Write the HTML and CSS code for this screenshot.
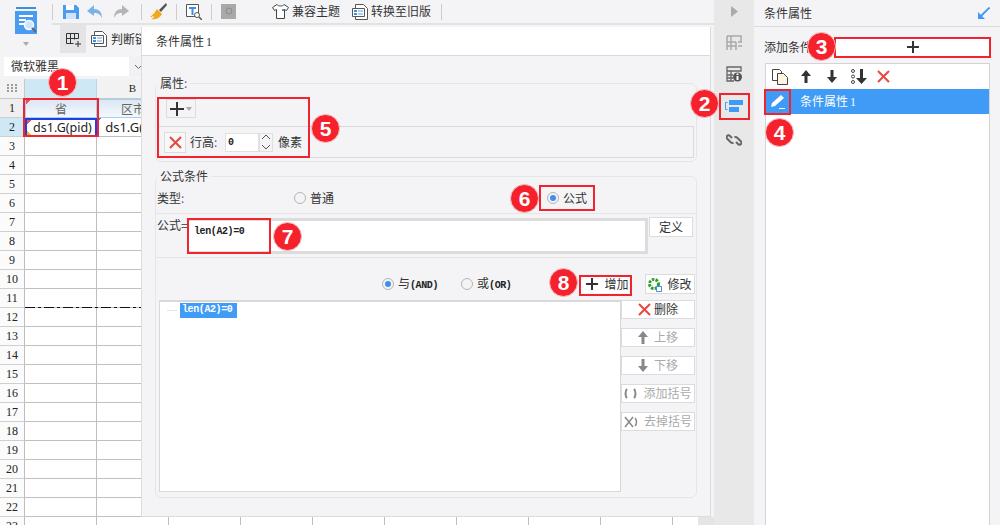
FILE: index.html
```html
<!DOCTYPE html>
<html lang="zh">
<head>
<meta charset="utf-8">
<title>条件属性</title>
<link rel="stylesheet" href="styles.css">
</head>
<body>
<div class="app">
  <main class="main">
    <header class="head">
      <div class="logo">
        <svg width="22" height="28" viewBox="0 0 22 28"><path d="M1 0h20v2H1z" fill="#3d8fe6"/><path d="M0 4h22v23H0z" fill="#4a9cf0"/><path d="M4 8h14v2H4zM4 12h7v2H4zM4 16h6v2H4z" fill="#fff"/><circle cx="14" cy="18" r="4.500" fill="#cfe4fa" stroke="#fff" stroke-width="1.500"/><path d="M17 21l4 4" stroke="#667" stroke-width="2"/></svg>
        <svg class="logo-caret" width="6" height="4" viewBox="0 0 6 4"><path d="M0 0h6L3 4z" fill="#aaa"/></svg>
      </div>
      <div class="head-rows">
        <div class="tools">
          <i class="sep sep-0"></i>
          <svg class="tool" width="16" height="16" viewBox="0 0 16 16"><path d="M0 1h13l3 3v11H0z" fill="#4a9cf0"/><path d="M3 1h8v5H3z" fill="#fff"/><path d="M3 9h10v6H3z" fill="#cfe4fa"/></svg>
          <svg class="tool tool-gap" width="17" height="16" viewBox="0 0 17 16"><path d="M7 1L0 7l7 5V9c4 0 6 1 8 5 0-6-3-9-8-9z" fill="#7db2e8"/></svg>
          <svg class="tool tool-gap" width="17" height="16" viewBox="0 0 17 16"><path d="M10 1l7 6-7 5V9C6 9 4 10 2 14c0-6 3-9 8-9z" fill="#b5b5b5"/></svg>
          <i class="sep sep-a"></i>
          <svg class="tool" width="17" height="17" viewBox="0 0 17 17"><path d="M16 0L9 7l2 2 6-7z" fill="#555"/><path d="M7 6l5 5c-2 4-6 6-11 5 3-1 3-2 3-3-2 1-3 1-4 1 3-2 5-5 7-8z" fill="#f0a81e"/></svg>
          <i class="sep sep-b"></i>
          <svg class="tool" width="17" height="17" viewBox="0 0 17 17"><path d="M1.500 1.500h12v12h-12z" fill="#fff" stroke="#555"/><path d="M4 4h7v2H8.500v6h-2V6H4z" fill="#3d8fe6"/><circle cx="12" cy="12" r="2.500" fill="#fff" stroke="#555"/><path d="M14 14l3 3" stroke="#555" stroke-width="1.500"/></svg>
          <i class="sep sep-c"></i>
          <svg class="tool" width="15" height="15" viewBox="0 0 15 15"><path d="M0 0h15v15H0z" fill="#a9a9a9"/><circle cx="8" cy="7" r="3" fill="none" stroke="#8a8a8a"/></svg>
          <span class="tool-label tool-theme">
            <svg width="17" height="15" viewBox="0 0 17 15"><path d="M5 .5L.5 3.500l2 3 2-1v9h8v-9l2 1 2-3L12 .5c-1 2-6 2-7 0z" fill="#fff" stroke="#444"/><path d="M10 5h2v2h-2z" fill="#3d8fe6"/></svg>
            兼容主题
          </span>
          <span class="tool-label tool-old">
            <svg width="16" height="16" viewBox="0 0 16 16"><path d="M3.500 .5h8l4 4v11h-12z" fill="#fff" stroke="#555"/><path d="M.5 4.500h12v8H.5z" fill="#fff" stroke="#555"/><path d="M2 6h3v2H2zM2 9h3v2H2z" fill="#3d8fe6"/><path d="M6 6h5v2H6zM6 9h5v2H6z" fill="#a9cff5"/></svg>
            转换至旧版
          </span>
          <i class="sep sep-d"></i>
        </div>
        <div class="tabs">
          <span class="tab tab-on">
            <svg width="15" height="15" viewBox="0 0 15 15"><path d="M.5 1.500h12M.5 6.500h12M.5 11.500h7M.5 1.500v10M4.500 1.500v10M8.500 1.500v6M12.500 1.500v5M12 9v6M9 12h6" fill="none" stroke="#333"/></svg>
          </span>
          <span class="tab">
            <svg width="16" height="16" viewBox="0 0 16 16"><path d="M3.500 .5h8l4 4v11h-12z" fill="#fff" stroke="#555"/><path d="M.5 4.500h12v8H.5z" fill="#fff" stroke="#555"/><path d="M2 6h3v2H2zM2 9h3v2H2z" fill="#3d8fe6"/><path d="M6 6h5v2H6zM6 9h5v2H6z" fill="#a9cff5"/></svg>
            判断链
          </span>
        </div>
      </div>
    </header>
    <div class="fontbar">
      <div class="font-select"><span>微软雅黑</span>
        <svg width="9" height="6" viewBox="0 0 9 6"><path d="M1 1l3.500 3.500L8 1" fill="none" stroke="#666"/></svg>
      </div>
    </div>
    <div class="colheads">
      <div class="corner"><svg width="11" height="9" viewBox="0 0 11 9"><path d="M0 0h2v2H0zM4 0h2v2H4zM8 0h2v2H8zM0 3h2v2H0zM4 3h2v2H4zM8 3h2v2H8zM0 6h2v2H0zM4 6h2v2H4zM8 6h2v2H8z" fill="#9a9a9a"/></svg></div>
      <div class="colhead colhead-on"></div>
      <div class="colhead">B</div>
      <div class="colhead"></div>
      <div class="colhead"></div>
      <div class="colhead"></div>
      <div class="colhead"></div>
      <div class="colhead"></div>
      <div class="colhead"></div>
    </div>
    <div class="sheet">
      <div class="rownums">
        <span class="rownum-plain">1</span><span class="rownum-on">2</span><span>3</span><span>4</span><span>5</span><span>6</span><span>7</span><span>8</span><span>9</span><span>10</span><span>11</span><span>12</span><span>13</span><span>14</span><span>15</span><span>16</span><span>17</span><span>18</span><span>19</span><span>20</span><span>21</span><span>22</span><span>23</span>
      </div>
      <div class="cells">
        <div class="cellrow">
          <div class="cell cell-head cell-flag">省</div>
          <div class="cell cell-head">区市</div>
        </div>
        <div class="cellrow">
          <div class="cell cell-data cell-selected">ds1.G(pid)</div>
          <div class="cell cell-data cell-mark">ds1.G(fid)</div>
        </div>
        <div class="pagebreak"></div>
      </div>
      <div class="vscroll"></div>
    </div>
  </main>

  <nav class="rail">
    <svg class="rail-arrow" width="7" height="11" viewBox="0 0 7 11"><path d="M0 0l7 5.500L0 11z" fill="#aaa"/></svg>
    <svg class="rail-icon rail-cell" width="16" height="16" viewBox="0 0 16 16"><path d="M1 1h14v6M1 1v14M5 1v14M1 7h9M1 11h9M10 7v8M12 7h4M12 11h4" fill="none" stroke="#a8a8a8" stroke-width="1.500"/></svg>
    <svg class="rail-icon rail-info" width="16" height="16" viewBox="0 0 16 16"><path d="M1 1h14v4H1zM1 5v10h7M5 5v10M1 9h6M1 12h6" fill="none" stroke="#666" stroke-width="1.300"/><circle cx="11.500" cy="11" r="4.500" fill="#555"/><path d="M10.500 7.500h2v1.500h-2zM10.500 10h2v4h-2z" fill="#fff"/></svg>
    <svg class="rail-icon rail-cond" width="18" height="14" viewBox="0 0 18 14"><path d="M2.500 3.500H.5v7h2" fill="none" stroke="#3f9bf5"/><path d="M4 1h14v5H4zM4 8h10v5H4z" fill="#3f9bf5"/></svg>
    <svg class="rail-icon rail-link" width="16" height="16" viewBox="0 0 16 16"><path d="M6 6L3.500 3.500a2 2 0 0 0-2.500 3L5 10.500a2 2 0 0 0 2.500 0M10 10l2.500 2.500a2 2 0 0 0 2.500-3L11 5.500a2 2 0 0 0-2.500 0" fill="none" stroke="#666" stroke-width="2"/></svg>
  </nav>

  <aside class="panel">
    <div class="panel-title">
      <span>条件属性</span>
      <svg width="12" height="12" viewBox="0 0 12 12"><path d="M11.500 .5L3 9" stroke="#3f9bf5" stroke-width="1.800"/><path d="M0 12V5l7 7z" fill="#3f9bf5"/></svg>
    </div>
    <div class="add-row">
      <span class="add-label">添加条件</span>
      <div class="add-button"><svg width="12" height="12" viewBox="0 0 12 12"><path d="M0 5h12v2H0zM5 0h2v12H5z" fill="#333"/></svg></div>
    </div>
    <div class="cond-list">
      <div class="cond-tools">
        <svg class="ct-copy" width="16" height="16" viewBox="0 0 16 16"><path d="M.5.500h7l2 2v9h-9z" fill="#fff" stroke="#444"/><path d="M5.500 4.500h6l4 4v7h-10z" fill="#fdf6e3" stroke="#444"/></svg>
        <svg class="ct-up" width="10" height="13" viewBox="0 0 10 13"><path d="M5 0l5 6H6.500v7h-3V6H0z" fill="#333"/></svg>
        <svg class="ct-down" width="10" height="13" viewBox="0 0 10 13"><path d="M5 13L0 7h3.500V0h3v7H10z" fill="#333"/></svg>
        <svg class="ct-bottom" width="16" height="15" viewBox="0 0 16 15"><circle cx="2" cy="2" r="1.500" fill="none" stroke="#444"/><circle cx="2" cy="7.500" r="1.500" fill="none" stroke="#444"/><circle cx="2" cy="13" r="1.500" fill="none" stroke="#444"/><path d="M10.500 15L5 9h4V0h3v9h4z" fill="#333"/></svg>
        <svg class="ct-del" width="13" height="13" viewBox="0 0 13 13"><path d="M1 1l11 11M12 1L1 12" stroke="#e8493f" stroke-width="2"/></svg>
      </div>
      <div class="cond-item">
        <svg class="cond-pen" width="16" height="16" viewBox="0 0 16 16"><path d="M11 1l3 3-9 8-4 1 1-4z" fill="#fff"/><path d="M9 14h6v1H9z" fill="#fff"/></svg>
        <span>条件属性<span class="latin">1</span></span>
      </div>
    </div>
  </aside>

  <section class="dialog">
    <div class="dialog-title">条件属性<span class="latin">1</span></div>
    <fieldset class="group group-attr">
      <legend>属性<span class="colon">:</span></legend>
      <div class="attr-add">
        <div class="plus-menu">
          <svg width="14" height="14" viewBox="0 0 14 14"><path d="M0 6h14v2H0zM6 0h2v14H6z" fill="#333"/></svg>
          <svg width="6" height="4" viewBox="0 0 6 4"><path d="M0 0h6L3 4z" fill="#aaa"/></svg>
        </div>
      </div>
      <div class="attr-row">
        <div class="attr-del"><svg width="13" height="13" viewBox="0 0 13 13"><path d="M1 1l11 11M12 1L1 12" stroke="#e8493f" stroke-width="2"/></svg></div>
        <span class="attr-label">行高<span class="colon">:</span></span>
        <div class="spin-input">0</div>
        <div class="spin">
          <svg width="10" height="6" viewBox="0 0 10 6"><path d="M1 5l4-4 4 4" fill="none" stroke="#555"/></svg>
          <svg width="10" height="6" viewBox="0 0 10 6"><path d="M1 1l4 4 4-4" fill="none" stroke="#555"/></svg>
        </div>
        <span class="attr-unit">像素</span>
      </div>
    </fieldset>

    <fieldset class="group group-formula">
      <legend>公式条件</legend>
      <div class="type-row">
        <span class="type-label">类型<span class="colon">:</span></span>
        <label class="radio-wrap type-normal"><i class="radio"></i><span>普通</span></label>
        <label class="radio-wrap"><i class="radio radio-on"></i><span>公式</span></label>
      </div>
      <div class="formula-row">
        <span class="formula-label">公式=</span>
        <div class="formula-box"><span class="code">len(A2)=0</span></div>
        <div class="btn btn-define">定义</div>
      </div>
      <div class="logic-row">
        <label class="radio-wrap logic-and"><i class="radio radio-on"></i><span>与<span class="code">(AND)</span></span></label>
        <label class="radio-wrap logic-or"><i class="radio"></i><span>或<span class="code">(OR)</span></span></label>
        <div class="btn btn-add"><svg width="12" height="12" viewBox="0 0 12 12"><path d="M0 5h12v2H0zM5 0h2v12H5z" fill="#333"/></svg>增加</div>
        <div class="btn btn-edit">
          <svg width="15" height="15" viewBox="0 0 15 15"><circle cx="7" cy="7" r="4.500" fill="#fff" stroke="#2ca02c" stroke-width="3" stroke-dasharray="2.500 1.200"/><path d="M9.500 9.500h5v5h-5z" fill="#fff" stroke="#3d8fe6"/></svg>
          修改
        </div>
      </div>
      <div class="rules">
        <div class="rule-list">
          <div class="rule"><i class="rule-line"></i><span class="code rule-text">len(A2)=0</span></div>
        </div>
        <div class="rule-actions">
          <div class="btn btn-side btn-del"><svg width="13" height="13" viewBox="0 0 13 13"><path d="M1 1l11 11M12 1L1 12" stroke="#e8493f" stroke-width="2"/></svg>删除</div>
          <div class="btn btn-side btn-off"><svg width="10" height="13" viewBox="0 0 10 13"><path d="M5 0l5 6H6.500v7h-3V6H0z" fill="#888"/></svg>上移</div>
          <div class="btn btn-side btn-off"><svg width="10" height="13" viewBox="0 0 10 13"><path d="M5 13L0 7h3.500V0h3v7H10z" fill="#888"/></svg>下移</div>
          <div class="btn btn-side btn-off"><svg width="13" height="11" viewBox="0 0 13 11"><path d="M3 1C1 3 1 8 3 10M10 1c2 2 2 7 0 9" fill="none" stroke="#888" stroke-width="2"/></svg>添加括号</div>
          <div class="btn btn-side btn-off"><svg width="14" height="12" viewBox="0 0 14 12"><path d="M1 1l8 10M9 1l-8 10M11 2c2 2 2 6 0 8" fill="none" stroke="#888" stroke-width="1.500"/></svg>去掉括号</div>
        </div>
      </div>
    </fieldset>
  </section>

  <div class="redbox box-1"></div>
  <div class="redbox box-2"></div>
  <div class="redbox box-3"></div>
  <div class="redbox box-4"></div>
  <div class="redbox box-5"></div>
  <div class="redbox box-6"></div>
  <div class="redbox box-7"></div>
  <div class="redbox box-8"></div>
  <div class="mark mark-1">1</div>
  <div class="mark mark-2">2</div>
  <div class="mark mark-3">3</div>
  <div class="mark mark-4">4</div>
  <div class="mark mark-5">5</div>
  <div class="mark mark-6">6</div>
  <div class="mark mark-7">7</div>
  <div class="mark mark-8">8</div>
</div>
</body>
</html>
```
FILE: styles.css
```css
* { box-sizing: border-box; }
html, body { margin: 0; padding: 0; }
body {
  width: 1000px;
  height: 525px;
  overflow: hidden;
  font: 12px/1.2 "Noto Sans CJK SC", "Liberation Sans", sans-serif;
  color: #333;
  background: #f4f4f6;
}
svg { display: block; flex: none; }
.app { position: relative; display: flex; width: 1000px; height: 525px; overflow: hidden; }

/* main column */
.main { width: 714px; flex: none; display: flex; flex-direction: column; background: #f4f4f6; }
.head { display: flex; height: 56px; flex: none; }
.logo { width: 52px; display: flex; flex-direction: column; align-items: center; padding: 7px 0 0; gap: 7px; }
.head-rows { flex: 1; display: flex; flex-direction: column; }
.tools { height: 25px; display: flex; align-items: center; border-bottom: 2px solid #e2e2e2; flex: none; }
.tool-gap { margin-left: 8px; }
.sep { width: 1px; height: 16px; background: #ccc; flex: none; }
.sep-0 { margin-right: 10px; }
.sep-a { margin: 0 8px 0 12px; }
.sep-b { margin: 0 8px 0 9px; }
.sep-c { margin: 0 9px 0 9px; }
.tool-label { display: flex; align-items: center; gap: 3px; color: #333; }
.tool-theme { margin-left: 36px; }
.tool-old { margin-left: 12px; }
.sep-d { margin-left: 10px; }
.tabs { display: flex; height: 28px; padding-left: 8px; }
.tab { display: flex; align-items: center; gap: 4px; padding: 0 5px; }
.tab-on { width: 26px; background: #e4e4e6; justify-content: center; padding: 0; }
.fontbar { height: 23px; flex: none; padding: 1px 0 0 4px; }
.font-select { width: 141px; height: 19px; display: flex; align-items: center; justify-content: space-between; padding: 0 2px 0 7px; background: linear-gradient(to right, #fff 125px, #f1f1f3 125px); }
.colheads { display: flex; height: 20px; flex: none; background: #f2f2f2; }
.corner { width: 25px; display: flex; align-items: center; justify-content: center; border-right: 1px solid #c8c8c8; border-bottom: 1px solid #c8c8c8; flex: none; }
.colhead { width: 72px; flex: none; text-align: center; font: 11px/19px "Liberation Serif", serif; color: #222; border-right: 1px solid #cfcfcf; border-bottom: 1px solid #c8c8c8; }
.colhead-on { background: #cfe8f5; border-color: #b8d6e8; }

.sheet { flex: 1; display: flex; min-height: 0; overflow: hidden; }
.rownums { width: 25px; flex: none; display: flex; flex-direction: column; background: #fbfbfb; }
.rownums span { height: 19px; flex: none; text-align: center; font: 12px/18px "Liberation Serif", serif; color: #222; border-right: 1px solid #bdbdbd; border-bottom: 1px solid #cfcfcf; }
.rownums .rownum-plain { background: #efefef; }
.rownums .rownum-on { background: #cfe8f5; }
.cells {
  position: relative;
  flex: 1;
  background-color: #fff;
  background-image: linear-gradient(to top, #bfbfbf 1px, transparent 1px), linear-gradient(to left, #bfbfbf 1px, transparent 1px);
  background-size: 72px 19px;
}
.vscroll { width: 16px; flex: none; background: #e5e5e5; }
.cellrow { display: flex; height: 19px; }
.cell { width: 72px; height: 19px; flex: none; text-align: center; white-space: nowrap; overflow: hidden; }
.cell-head { background: linear-gradient(#dbe7f3, #f4f8fc); border: 1px solid #a9cdee; line-height: 17px; color: #666; }
.cell-flag { background: linear-gradient(135deg, #e8505a 3px, transparent 3px), linear-gradient(#dbe7f3, #f4f8fc); }
.cell-data { font: 13px/18px "Noto Sans", sans-serif; color: #222; background: #fff; border-right: 1px solid #bfbfbf; border-bottom: 1px solid #bfbfbf; padding: 0 0 0 3px; }
.cell-mark { background: linear-gradient(135deg, #777 3px, #fff 3px); }
.cell-selected { border: 2px solid #1f3fe0; line-height: 15px; font-size: 12.500px; background: linear-gradient(135deg, #e8505a 3px, transparent 3px), linear-gradient(45deg, #f0b429 3px, #fff 3px); }
.pagebreak { position: absolute; left: 0; right: 0; top: 208px; height: 1px; background: repeating-linear-gradient(90deg, #111 0 10px, transparent 10px 13px, #111 13px 16px, transparent 16px 19px); }

/* rail */
.rail { width: 40px; flex: none; background: #e8e8e8; display: flex; flex-direction: column; align-items: center; }
.rail-arrow { margin-top: 6px; margin-right: -1px; }
.rail-cell { margin-top: 18px; }
.rail-info { margin-top: 15px; }
.rail-cond { margin-top: 17px; }
.rail-link { margin-top: 19px; }

/* right panel */
.panel { flex: 1; display: flex; flex-direction: column; background: #f4f4f6; }
.panel-title { height: 27px; flex: none; display: flex; align-items: center; justify-content: space-between; padding: 0 10px; border-bottom: 1px solid #dcdcdc; color: #333; }
.add-row { height: 36px; flex: none; display: flex; align-items: center; padding: 4px 10px 0; }
.add-label { width: 71px; flex: none; }
.add-button { flex: 1; height: 20px; background: #fff; display: flex; align-items: center; justify-content: center; }
.cond-list { flex: 1; margin: 0 10px 0 11px; background: #fff; border: 1px solid #d4d4d4; border-bottom: 0; }
.cond-tools { height: 25px; display: flex; align-items: center; padding-left: 6px; }
.ct-up { margin-left: 13px; }
.ct-down { margin-left: 16px; }
.ct-bottom { margin-left: 14px; }
.ct-del { margin-left: 10px; }
.cond-item { height: 25px; display: flex; align-items: center; background: #3f9bf5; color: #fff; padding-left: 4px; }
.cond-pen { margin-right: 14px; }
.latin { font: 12px "Liberation Serif", serif; margin-left: 2px; }

/* dialog */
.dialog { position: absolute; left: 141px; top: 27px; width: 570px; height: 490px; background: #f4f4f6; border-left: 1px solid #dcdcdc; border-right: 1px solid #dcdcdc; border-bottom: 1px solid #dcdcdc; box-shadow: 3px 0 0 #f4f4f6; }
.dialog-title { height: 29px; background: #fff; border-bottom: 1px solid #dadada; padding: 7px 0 0 14px; color: #333; }
.group { margin: 19px 13px 0 13px; padding: 0; border: 1px solid #e6e6e9; border-radius: 6px; min-width: 0; }
.group legend { padding: 0 3px; margin-left: 1px; font-size: 12px; height: 17px; line-height: 16px; }
.colon { color: #80508a; }
.group-attr { height: 87px; }
.attr-add { height: 36px; padding: 9px 0 0 10px; margin-top: -2px; }
.plus-menu { width: 30px; height: 19px; border: 1px solid #dcdcdc; display: flex; align-items: center; justify-content: center; gap: 2px; background: #f4f4f6; }
.attr-row { height: 32px; margin: 0 2px 0 1px; border: 1px solid #dadada; display: flex; align-items: center; padding-left: 6px; }
.attr-del { width: 22px; height: 21px; border: 1px solid #dcdcdc; background: #f8f8f8; display: flex; align-items: center; justify-content: center; }
.attr-label { margin-left: 4px; width: 35px; }
.spin-input { width: 34px; height: 19px; background: #fff; border: 1px solid #e0e0e0; font: bold 10px/17px "Liberation Mono", monospace; padding-left: 2px; color: #222; }
.spin { width: 14px; display: flex; flex-direction: column; align-items: center; gap: 4px; border: 1px solid #e0e0e0; height: 19px; justify-content: center; }
.attr-unit { margin-left: 5px; }

.group-formula { height: 330px; margin-top: 6px; }
.code { font: bold 10px/14px "Liberation Mono", monospace; letter-spacing: -.4px; color: #222; }
.type-row { height: 30px; margin-top: -1px; display: flex; align-items: center; border-bottom: 1px solid #e6e6e9; }
.type-label { width: 138px; padding-left: 1px; flex: none; }
.type-normal { width: 253px; }
.radio-wrap { display: flex; align-items: center; gap: 4px; flex: none; }
.radio { width: 12px; height: 12px; border-radius: 50%; background: #f4f4f4; border: 1px solid #b5b5b5; display: flex; align-items: center; justify-content: center; flex: none; }
.radio-on::after { content: ""; width: 6px; height: 6px; border-radius: 50%; background: #3f8ff0; }
.formula-row { height: 44px; display: flex; align-items: flex-start; border-bottom: 1px solid #e6e6e9; padding-top: 4px; }
.formula-label { width: 31px; padding-left: 1px; flex: none; white-space: nowrap; }
.formula-box { width: 461px; height: 36px; background: #fff; border-top: 3px solid #dcdcdc; border-bottom: 3px solid #dcdcdc; border-right: 3px solid #dcdcdc; padding: 1px 0 0 7px; flex: none; }
.btn { display: flex; align-items: center; background: #fff; border: 1px solid #dcdcdc; color: #333; flex: none; }
.btn-define { width: 44px; height: 20px; justify-content: center; margin-left: 1px; margin-top: -1px; }
.logic-row { height: 43px; display: flex; align-items: center; padding-top: 9px; }
.logic-and { margin-left: 226px; }
.logic-or { margin-left: 23px; }
.btn-add { width: 49px; height: 18px; margin-left: 69px; gap: 6px; padding-left: 6px; border: 0; }
.btn-edit { width: 50px; height: 20px; margin-left: 16px; gap: 5px; padding-left: 1px; }
.rules { display: flex; margin-top: -1px; }
.rule-list { width: 462px; height: 192px; margin-left: 3px; background: #fff; border: 1px solid #d8d8d8; border-top-width: 2px; flex: none; }
.rule { display: flex; align-items: center; height: 16px; }
.rule-line { width: 10px; height: 1px; background: #e4e4e4; margin: 0 3px 0 7px; }
.rule-text { background: #409cf6; color: #fff; padding: 0 2px; width: 57px; height: 15px; }
.rule-actions { display: flex; flex-direction: column; gap: 9px; }
.btn-side { width: 74px; height: 19px; justify-content: center; gap: 6px; }
.btn-del { gap: 3px; }
.btn-off { color: #aaa; }

/* annotation overlays */
.redbox { position: absolute; border: 2px solid #f0242e; pointer-events: none; }
.box-1 { left: 23px; top: 98px; width: 76px; height: 39px; }
.box-2 { left: 719px; top: 93px; width: 31px; height: 27px; }
.box-3 { left: 834px; top: 37px; width: 157px; height: 21px; }
.box-4 { left: 764px; top: 89px; width: 27px; height: 26px; }
.box-5 { left: 157px; top: 97px; width: 153px; height: 61px; }
.box-6 { left: 539px; top: 185px; width: 56px; height: 26px; }
.box-7 { left: 187px; top: 218px; width: 84px; height: 36px; }
.box-8 { left: 579px; top: 275px; width: 53px; height: 21px; }
.mark { position: absolute; width: 29px; height: 29px; border-radius: 50%; background: #f5222d; border: 1px solid #f7c4c4; color: #fff; text-align: center; font: bold 21px/27px "Liberation Sans", sans-serif; }
.mark-1 { left: 48px; top: 68px; }
.mark-2 { left: 690px; top: 89px; }
.mark-3 { left: 807px; top: 32px; }
.mark-4 { left: 765px; top: 118px; }
.mark-5 { left: 311px; top: 114px; }
.mark-6 { left: 510px; top: 184px; }
.mark-7 { left: 273px; top: 222px; }
.mark-8 { left: 549px; top: 268px; }
```
